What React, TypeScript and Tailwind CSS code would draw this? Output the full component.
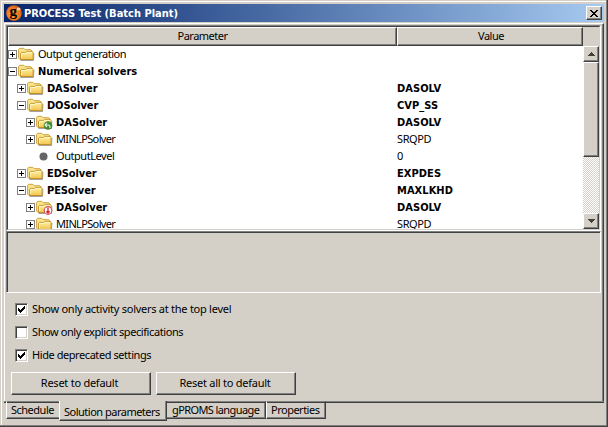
import React from "react";

const REG = "font-['Noto_Sans',sans-serif]";
const BOLD = "font-['DejaVu_Sans_Condensed','DejaVu_Sans',sans-serif] font-bold";
const RAISED =
  "border border-t-white border-l-white border-r-[#404040] border-b-[#404040] shadow-[inset_-1px_-1px_0_#808080]";

type Badge = "green" | "red";
type Row = {
  level: 0 | 1 | 2;
  name: string;
  value?: string;
  bold?: boolean;
  open?: boolean;
  leaf?: boolean;
  badge?: Badge;
  track: string;
};

const rows: Row[] = [
  { level: 0, name: "Output generation", track: "tracking-[-0.5px]" },
  { level: 0, name: "Numerical solvers", bold: true, open: true, track: "tracking-[-0.05px]" },
  { level: 1, name: "DASolver", value: "DASOLV", bold: true, track: "tracking-[-0.1px]" },
  { level: 1, name: "DOSolver", value: "CVP_SS", bold: true, open: true, track: "tracking-[-0.1px]" },
  { level: 2, name: "DASolver", value: "DASOLV", bold: true, badge: "green", track: "tracking-[0px]" },
  { level: 2, name: "MINLPSolver", value: "SRQPD", track: "tracking-[-0.65px]" },
  { level: 2, name: "OutputLevel", value: "0", leaf: true, track: "tracking-[-0.45px]" },
  { level: 1, name: "EDSolver", value: "EXPDES", bold: true, track: "tracking-[-0.1px]" },
  { level: 1, name: "PESolver", value: "MAXLKHD", bold: true, open: true, track: "tracking-[-0.1px]" },
  { level: 2, name: "DASolver", value: "DASOLV", bold: true, badge: "red", track: "tracking-[0px]" },
  { level: 2, name: "MINLPSolver", value: "SRQPD", track: "tracking-[-0.65px]" },
];

const indent = ["pl-0", "pl-[9px]", "pl-[18px]"];

function Expander({ open }: { open?: boolean }) {
  return (
    <svg width="9" height="9" viewBox="0 0 9 9" shapeRendering="crispEdges" className="shrink-0">
      <rect x=".5" y=".5" width="8" height="8" fill="#fff" stroke="#808080" />
      <path d={open ? "M2 4.5h5" : "M2 4.5h5M4.5 2v5"} stroke="#000" />
    </svg>
  );
}

function Folder({ badge }: { badge?: Badge }) {
  return (
    <svg width="17" height="15" viewBox="0 0 17 15" className="shrink-0">
      <defs>
        <linearGradient id="folder" x1="0" y1="0" x2="0" y2="1">
          <stop offset="0" stopColor="#fff2a0" />
          <stop offset="1" stopColor="#f2c452" />
        </linearGradient>
      </defs>
      <path d="M2.500 13.500h13l.4-7.500" fill="none" stroke="#666" strokeOpacity=".6" />
      <path d="M.6 11V2.300L1.600 1.300h4.200l1.400 1.400h5.600l1.200 1.300v8.500H2z" fill="#fae58c" stroke="#c9982e" strokeWidth=".9" />
      <path d="M2.600 12.500V6.200l.9-.8h4.300l1-1h5.500l.8.900v7.200z" fill="url(#folder)" stroke="#c08c22" strokeWidth=".9" />
      <path d="M3.600 11V6.400h4.500l1-1h4.800" fill="none" stroke="#fffbdc" strokeWidth=".8" />
      {badge === "green" && (
        <g>
          <circle cx="12" cy="10.500" r="4.300" fill="#3f8a30" />
          <path d="M9.300 10h3.200q1.700.3 1.500 3M11 7.900L9 10l2 2" fill="none" stroke="#e4f5de" strokeWidth="1.100" />
        </g>
      )}
      {badge === "red" && (
        <g>
          <circle cx="12" cy="10.500" r="3.800" fill="#fff" stroke="#d2545c" strokeWidth="1.200" />
          <path d="M12 7.500v5.500M10.400 11.200l1.600 1.800 1.600-1.800" fill="none" stroke="#d8202c" strokeWidth="1.300" />
        </g>
      )}
    </svg>
  );
}

function TreeRow({ row }: { row: Row }) {
  return (
    <div className={`flex h-[17px] shrink-0 ${row.bold ? BOLD : REG} ${row.bold ? "leading-[17px]" : "leading-[15px]"}`}>
      <div className={`flex w-[389px] ${indent[row.level]}`}>
        {row.leaf ? (
          <div className="flex w-[27px] shrink-0 items-center justify-end pr-[5px]">
            <svg width="9" height="9" viewBox="0 0 9 9">
              <circle cx="4.500" cy="4.500" r="4" fill="#666" />
            </svg>
          </div>
        ) : (
          <div className="flex w-[27px] shrink-0 items-center gap-[1px]">
            <Expander open={row.open} />
            <Folder badge={row.badge} />
          </div>
        )}
        <span className={`pl-[3px] ${row.track}`}>{row.name}</span>
      </div>
      <span className={row.bold ? "tracking-[0.05px]" : "tracking-[-0.4px]"}>{row.value}</span>
    </div>
  );
}

function Arrow({ down }: { down?: boolean }) {
  return (
    <div className={`flex h-4 w-4 shrink-0 items-center justify-center bg-[#d4d0c8] ${RAISED}`}>
      <svg width="7" height="4" viewBox="0 0 7 4" shapeRendering="crispEdges">
        <path d={down ? "M0 0h7L3.500 4z" : "M0 4h7L3.500 0z"} fill="#404040" />
      </svg>
    </div>
  );
}

function Check({ checked, label, track }: { checked?: boolean; label: string; track: string }) {
  return (
    <div className="flex h-[23px] items-center">
      <div className="mr-1 h-[13px] w-[13px] border border-t-[#808080] border-l-[#808080] border-r-white border-b-white bg-white shadow-[inset_1px_1px_0_#404040,inset_-1px_-1px_0_#d4d0c8]">
        {checked && (
          <svg width="11" height="11" viewBox="0 0 11 11" shapeRendering="crispEdges">
            <path d="M2 4h1v1h1v1h1V5h1V4h1V3h1V2h1v3H8v1H7v1H6v1H5v1H4V8H3V7H2z" fill="#000" />
          </svg>
        )}
      </div>
      <span className={`pb-[2px] ${track}`}>{label}</span>
    </div>
  );
}

export default function App() {
  return (
    <div className={`flex h-[427px] w-[608px] flex-col overflow-hidden border-r border-b border-r-[#404040] border-b-[#404040] bg-[#d4d0c8] text-[11px] leading-[17px] whitespace-nowrap text-black ${REG}`}>
      <div className="flex min-h-0 flex-1 flex-col border-r border-b border-r-[#808080] border-b-[#808080] pt-px pl-px">
        <div className="flex min-h-0 flex-1 flex-col border-t border-l border-white pt-[2px] pr-[2px] pl-[2px]">
          <div className="flex h-[18px] shrink-0 items-center bg-linear-to-r from-[#0a246a] to-[#a6caf0] pr-[2px] pl-[2px]">
            <svg width="16" height="16" viewBox="0 0 16 16" className="shrink-0 overflow-visible">
              <defs>
                <radialGradient id="ball" cx=".4" cy=".6" r=".7">
                  <stop offset="0" stopColor="#ff9a30" />
                  <stop offset=".7" stopColor="#e8701a" />
                  <stop offset="1" stopColor="#a8440c" />
                </radialGradient>
              </defs>
              <circle cx="8" cy="8" r="7.800" fill="url(#ball)" />
              <ellipse cx="12.500" cy="4" rx="2" ry="1.500" fill="#ffd0a0" />
              <text x="3.500" y="11" fontFamily="Liberation Serif, serif" fontWeight="bold" fontSize="15">g</text>
            </svg>
            <span className={`ml-[2px] flex-1 text-white ${BOLD}`}>PROCESS Test (Batch Plant)</span>
            <div className={`flex h-[14px] w-4 items-center justify-center bg-[#d4d0c8] ${RAISED}`}>
              <svg width="8" height="7" viewBox="0 0 8 7" shapeRendering="crispEdges">
                <path d="M0 0h2v1h1v1h2V1h1V0h2v1H7v1H6v1H5v1h1v1h1v1h1v1H6V6H5V5H3v1H2v1H0V6h1V5h1V4h1V3H2V2H1V1H0z" />
              </svg>
            </div>
          </div>

          <div className="mt-px flex h-[379px] w-[600px] shrink-0 flex-col border-t border-r border-l border-t-white border-r-[#404040] border-l-white">
            <div className="flex flex-1 flex-col border-r border-r-[#808080] pt-px pl-px">
              <div className="h-[206px] w-[595px] border border-t-[#808080] border-r-white border-b-white border-l-[#808080]">
                <div className="flex h-[204px] flex-col border border-t-[#404040] border-r-[#d4d0c8] border-b-[#d4d0c8] border-l-[#404040] bg-white">
                  <div className="flex h-[19px] shrink-0 bg-[#d4d0c8] text-center leading-[15px] tracking-[-0.5px]">
                    <div className={`w-[389px] ${RAISED}`}>Parameter</div>
                    <div className={`w-[186px] pl-[2px] ${RAISED}`}>Value</div>
                  </div>
                  <div className="flex min-h-0 flex-1">
                    <div className="flex w-[575px] flex-col overflow-hidden">
                      {rows.map((row, i) => (
                        <TreeRow key={i} row={row} />
                      ))}
                    </div>
                    <div className="flex w-4 flex-col bg-[repeating-conic-gradient(#fff_0_25%,#d4d0c8_0_50%)] bg-size-[2px_2px]">
                      <Arrow />
                      <div className={`h-[95px] bg-[#d4d0c8] ${RAISED}`} />
                      <div className="flex-1" />
                      <Arrow down />
                    </div>
                  </div>
                </div>
              </div>
              <div className="h-[62px] w-[595px] border border-t-[#808080] border-r-white border-b-white border-l-[#808080] shadow-[inset_1px_1px_0_#404040]" />
              <div className="mt-[5px] flex flex-col pl-[9px]">
                <Check checked label="Show only activity solvers at the top level" track="tracking-[-0.26px]" />
                <Check label="Show only explicit specifications" track="tracking-[-0.41px]" />
                <Check checked label="Hide deprecated settings" track="tracking-[-0.43px]" />
              </div>
              <div className="mt-[5px] flex gap-[5px] pl-[5px] tracking-[-0.25px]">
                <div className={`flex h-[23px] w-[140px] items-center justify-center pr-[3px] pb-[2px] ${RAISED}`}>Reset to default</div>
                <div className={`flex h-[23px] w-[140px] items-center justify-center pr-[2px] pb-[2px] ${RAISED}`}>Reset all to default</div>
              </div>
            </div>
          </div>

          <div className="-mt-px flex h-[21px] shrink-0">
            <div className="w-[2px] border-t border-t-[#808080] shadow-[inset_0_1px_0_#404040]" />
            <div className="h-[18px] w-[53px] border-t border-b border-l border-t-[#808080] border-b-[#404040] border-l-white pl-[4px] leading-[16px] tracking-[-0.5px] shadow-[inset_0_1px_0_#404040,inset_0_-1px_0_#808080]">Schedule</div>
            <div className="h-[20px] w-[108px] border-r border-b border-l border-r-[#404040] border-b-[#404040] border-l-white pl-[4px] leading-[21px] tracking-[-0.5px] shadow-[inset_-1px_-1px_0_#808080]">Solution parameters</div>
            <div className="h-[18px] w-[99px] border-t border-r border-b border-t-[#808080] border-r-[#404040] border-b-[#404040] pl-[5px] leading-[16px] tracking-[-0.6px] shadow-[inset_0_1px_0_#404040,inset_-1px_-1px_0_#808080]">gPROMS language</div>
            <div className="h-[18px] w-[60px] border border-t-[#808080] border-r-[#404040] border-b-[#404040] border-l-white pl-[4px] leading-[16px] tracking-[-0.5px] shadow-[inset_0_1px_0_#404040,inset_-1px_-1px_0_#808080]">Properties</div>
            <div className="flex-1 border-t border-t-[#808080] shadow-[inset_0_1px_0_#404040]" />
          </div>
        </div>
      </div>
    </div>
  );
}
